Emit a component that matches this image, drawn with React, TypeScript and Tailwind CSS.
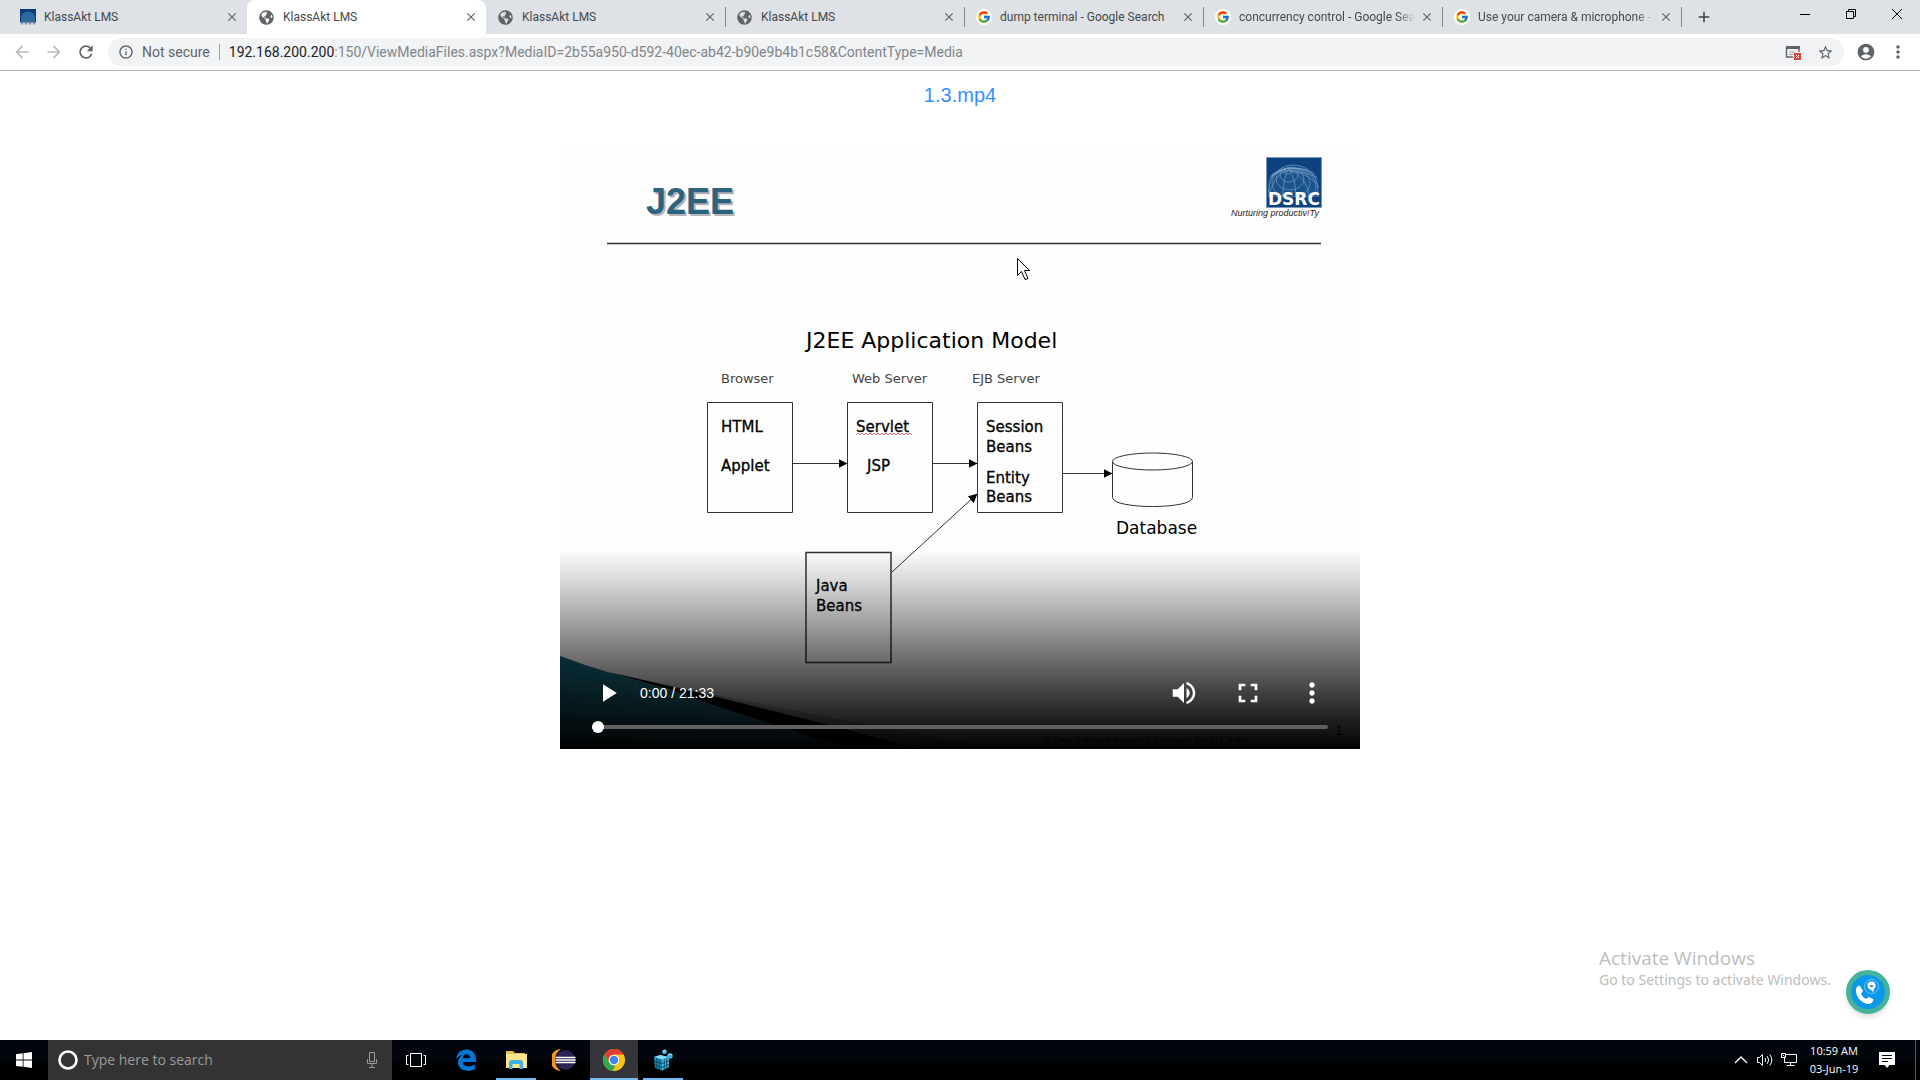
import React from "react";
import { MdRefresh, MdAccountCircle, MdStarBorder, MdMoreVert, MdInfoOutline, MdArrowBack, MdArrowForward, MdClose, MdAdd, MdPlayArrow, MdVolumeUp, MdFullscreen } from "react-icons/md";
import { FaGlobeAmericas } from "react-icons/fa";
import { FcGoogle } from "react-icons/fc";

const GRID = [0, 1, 2, 3, 4, 5, 6];

function DsrcMark() {
  return (
    <svg viewBox="0 0 16 16" className="size-4" aria-hidden="true">
      <rect width="16" height="16" fill="#0b3f7a" />
      <path d="M1 13V9a7 6.500 0 0 1 14 0v4z" fill="#2f6a9e" />
      <path d="M0 13.500h16V16H0z" fill="#d4d9df" />
      <path d="M1 14.800h2m2 0h2m2 0h2m2 0h2" stroke="#5d6e85" />
    </svg>
  );
}

function Favicon({ kind }: { kind: string }) {
  if (kind === "dsrc") return <DsrcMark />;
  if (kind === "google")
    return (
      <span className="flex size-4 items-center justify-center rounded-full bg-white">
        <FcGoogle size={14} />
      </span>
    );
  return <FaGlobeAmericas size={15} className="mr-px text-[#5f6368]" />;
}

const TABS = [
  { title: "KlassAkt LMS", kind: "dsrc" },
  { title: "KlassAkt LMS", kind: "globe", active: true },
  { title: "KlassAkt LMS", kind: "globe" },
  { title: "KlassAkt LMS", kind: "globe" },
  { title: "dump terminal - Google Search", kind: "google" },
  { title: "concurrency control - Google Sea", kind: "google", faded: true },
  { title: "Use your camera & microphone -", kind: "google", faded: true },
];

function TabStrip() {
  return (
    <header className="flex h-[34px] bg-[#dee1e6] pl-2">
      <div role="tablist" className="flex min-w-0 flex-1">
        {TABS.map((t, i) => (
          <div
            key={i}
            className={
              t.active
                ? "flex w-[239px] items-center rounded-t-lg bg-white pr-[7px] pl-3"
                : "flex w-[239px] items-center pr-[7px] pl-3"
            }
          >
            <button role="tab" aria-selected={!!t.active} className="flex min-w-0 flex-1 items-center gap-2 text-left">
              <span className="shrink-0">
                <Favicon kind={t.kind} />
              </span>
              <span
                className={
                  t.faded
                    ? "block flex-1 [mask-image:linear-gradient(to_right,black_90%,transparent)] font-['Roboto'] text-xs whitespace-nowrap text-[#45494d]"
                    : "block flex-1 font-['Roboto'] text-xs whitespace-nowrap text-[#45494d]"
                }
              >
                {t.title}
              </span>
            </button>
            <button aria-label="Close tab" className="ml-1 flex size-4 items-center justify-center text-[#5f6368]">
              <MdClose size={14} />
            </button>
            {i > 1 ? <span className="-mr-2 ml-[7px] h-5 w-px bg-[#85898e]" /> : <span className="-mr-2 ml-2" />}
          </div>
        ))}
        <button aria-label="New tab" className="ml-[11px] flex w-6 items-center justify-center text-[#3c4043]">
          <MdAdd size={18} />
        </button>
      </div>
      <div className="flex h-7 shrink-0 text-black">
        <button aria-label="Minimize" className="flex w-[46px] items-center justify-center">
          <svg viewBox="0 0 10 10" className="size-[10px]"><path d="M0 5.500h10" stroke="currentColor" /></svg>
        </button>
        <button aria-label="Restore" className="flex w-[46px] items-center justify-center">
          <svg viewBox="0 0 10 10" className="size-[10px]" fill="none" stroke="currentColor"><path d="M.500 2.500h7v7h-7zM2.500 2.500v-2h7v7h-2" /></svg>
        </button>
        <button aria-label="Close" className="flex w-[46px] items-center justify-center">
          <svg viewBox="0 0 10 10" className="size-[10px]" stroke="currentColor"><path d="M0 0l10 10M10 0L0 10" /></svg>
        </button>
      </div>
    </header>
  );
}

function Toolbar() {
  return (
    <nav className="flex h-[37px] items-center border-b border-[#b4b6b9] bg-white px-3 font-['Roboto'] text-[#5f6368]">
      <button aria-label="Back" className="mr-3 flex w-5 justify-center text-[#babcbe]"><MdArrowBack size={20} /></button>
      <button aria-label="Forward" className="mr-3 flex w-5 justify-center text-[#babcbe]"><MdArrowForward size={20} /></button>
      <button aria-label="Reload" className="mr-3 flex w-5 justify-center"><MdRefresh size={20} /></button>
      <div className="flex h-7 min-w-0 flex-1 items-center rounded-full bg-[#f1f3f4] px-[10px]">
        <MdInfoOutline size={16} />
        <span className="ml-2 text-sm">Not secure</span>
        <span className="mx-[9px] h-4 w-px bg-[#9aa0a6]" />
        <div role="textbox" aria-label="Address" className="flex-1 text-sm whitespace-nowrap text-[#80868b]">
          <span className="text-[#202124]">192.168.200.200</span>:150/ViewMediaFiles.aspx?MediaID=2b55a950-d592-40ec-ab42-b90e9b4b1c58&amp;ContentType=Media
        </div>
        <button aria-label="Pop-up blocked" className="mr-4">
          <svg viewBox="0 0 16 16" className="size-4" fill="none">
            <path d="M1.500 3v10H8M14 3v5" stroke="#5f6368" strokeWidth="1.400" />
            <path d="M1 2h14v3H1z" fill="#5f6368" />
            <path d="M4 8h6M4 10.500h4" stroke="#9aa0a6" />
            <rect x="9" y="9" width="7" height="7" fill="#db4437" />
            <path d="M11 11l3 3m0-3l-3 3" stroke="#fff" />
          </svg>
        </button>
        <button aria-label="Bookmark this page"><MdStarBorder size={17} /></button>
      </div>
      <button aria-label="Profile" className="ml-3"><MdAccountCircle size={20} /></button>
      <button aria-label="Menu" className="ml-3"><MdMoreVert size={20} /></button>
    </nav>
  );
}

const LINKS = ["M233 314.500h54", "M373 314.500h44", "M503 324.500h49", "M332 423l85-78"];

function Slide() {
  return (
    <svg viewBox="0 0 800 600" className="block w-full" role="img" aria-label="J2EE Application Model">
      <defs>
        <marker id="arrow" viewBox="0 0 9 9" refX="8.500" refY="4.500" markerWidth="9" markerHeight="9" markerUnits="userSpaceOnUse" orient="auto">
          <path d="M0 0l9 4.500L0 9z" />
        </marker>
        <clipPath id="globe"><path d="M708 48V38a25 24 0 0 1 51 0v10z" /></clipPath>
        <linearGradient id="teal" x1="0" y1="0" x2="1" y2="1">
          <stop offset="0" stopColor="#0f627a" />
          <stop offset="1" stopColor="#48b4c8" />
        </linearGradient>
        <linearGradient id="shade" x1="0" y1="0" x2="0" y2="1">
          <stop offset="0" stopColor="#000" stopOpacity="0" />
          <stop offset=".2" stopColor="#000" stopOpacity=".19" />
          <stop offset=".45" stopColor="#000" stopOpacity=".46" />
          <stop offset=".7" stopColor="#000" stopOpacity=".73" />
          <stop offset=".87" stopColor="#000" stopOpacity=".89" />
          <stop offset="1" stopColor="#000" stopOpacity=".99" />
        </linearGradient>
      </defs>
      <rect width="800" height="600" fill="#fefefe" />

      <g fontFamily="Liberation Sans" fontWeight="700" fontSize="36">
        <text x="88" y="67" fill="#b9b4b8">J2EE</text>
        <text x="86" y="65" fill="#2c6480">J2EE</text>
      </g>
      <path d="M47 94.500h714" stroke="#333" strokeWidth="1.500" />

      <rect x="706.500" y="8.500" width="55" height="50" fill="#0c4280" stroke="#7c95b5" />
      <g clipPath="url(#globe)" fill="none" stroke="#7fa9cc" strokeWidth=".6">
        <path d="M709 48V40a24.500 24 0 0 1 49 0v8z" fill="#1a5389" />
        {GRID.map((i) => (
          <ellipse key={i} cx={728 + i} cy={22 + i * 4} rx={4 + i * 5} ry={3 + i * 4} />
        ))}
        {GRID.map((i) => (
          <path key={"m" + i} d={`M728 21Q${700 + i * 12} 26 ${694 + i * 14} 52`} />
        ))}
      </g>
      <text x="708" y="56" fontFamily="DejaVu Sans" fontWeight="700" fontSize="17" fill="#fff">DSRC</text>
      <text x="671" y="67" fontFamily="Liberation Sans" fontStyle="italic" fontSize="9" fill="#222">
        Nurturing productiv<tspan fill="#c4472e">I</tspan>Ty
      </text>

      <g fontFamily="DejaVu Sans" fill="#000">
        <text x="246" y="199" fontSize="22">J2EE Application Model</text>
        <g fontSize="13" fill="#444">
          <text x="161" y="234">Browser</text>
          <text x="292" y="234">Web Server</text>
          <text x="412" y="234">EJB Server</text>
        </g>
        <g fontSize="15" stroke="#000" strokeWidth=".3">
          <text x="161" y="283">HTML</text>
          <text x="161" y="322">Applet</text>
          <text x="296" y="283">Servlet</text>
          <text x="307" y="322">JSP</text>
          <text x="426" y="283">Session</text>
          <text x="426" y="303">Beans</text>
          <text x="426" y="334">Entity</text>
          <text x="426" y="353">Beans</text>
          <text x="256" y="442">Java</text>
          <text x="256" y="462">Beans</text>
        </g>
        <text x="556" y="385" fontSize="17">Database</text>
      </g>
      <path d="M296 286l2-2 2 2 2-2 2 2 2-2 2 2 2-2 2 2 2-2 2 2 2-2 2 2 2-2 2 2 2-2 2 2 2-2 2 2 2-2 2 2 2-2 2 2 2-2 2 2 2-2 2 2 2-2 2 2" fill="none" stroke="#e06a74" />

      <g fill="none" stroke="#333">
        <path d="M147.500 253.500h85v110h-85zM287.500 253.500h85v110h-85zM417.500 253.500h85v110h-85z" />
        <path d="M246 403.500h85v110h-85z" strokeWidth="1.500" />
        {LINKS.map((d) => (
          <path key={d} d={d} markerEnd="url(#arrow)" />
        ))}
        <ellipse cx="592.500" cy="312.500" rx="40" ry="8.500" />
        <path d="M552.500 312.500v36c0 12 80 12 80 0v-36" />
      </g>

      <path d="M48 523C180 552 300 574 440 600H340z" fill="#c3d0d4" />
      <path d="M0 507Q26 517 51 524L115 542L224 578L292 600H0z" fill="url(#teal)" />
      <path d="M48 523L153 547L265 575L360 600H290L224 579L153 556L115 542z" fill="#000" />
      <g fontFamily="Liberation Sans" fill="#000">
        <text x="484" y="594" fontSize="9">© Data Software Research Company Pvt Ltd. India</text>
        <text x="776" y="586" fontSize="12">1</text>
      </g>
      <rect y="400" width="800" height="200" fill="url(#shade)" />

      <path d="M457.500 109.500v17l4-4 3.500 8 3-1-3.500-8h5z" fill="#fff" stroke="#000" />
    </svg>
  );
}

function VideoPlayer() {
  return (
    <section className="relative w-full max-w-[800px]" aria-label="Video player">
      <Slide />
      <div className="absolute inset-x-0 bottom-0 px-8 pb-4 font-['Liberation_Sans'] text-white">
        <div className="mb-1 flex h-12 items-center">
          <button aria-label="Play" className="flex w-8 justify-center"><MdPlayArrow size={30} /></button>
          <span className="ml-4 flex-1 text-sm">0:00 / 21:33</span>
          <button aria-label="Mute" className="flex w-16 justify-center"><MdVolumeUp size={30} /></button>
          <button aria-label="Full screen" className="flex w-16 justify-center"><MdFullscreen size={32} /></button>
          <button aria-label="More options" className="-mr-4 flex w-16 justify-center"><MdMoreVert size={32} /></button>
        </div>
        <input
          type="range"
          aria-label="Seek"
          min={0}
          max={1293}
          defaultValue={0}
          className="block h-3 w-full appearance-none bg-transparent [&::-webkit-slider-runnable-track]:h-1 [&::-webkit-slider-runnable-track]:rounded-full [&::-webkit-slider-runnable-track]:bg-[#606060] [&::-webkit-slider-thumb]:-mt-1 [&::-webkit-slider-thumb]:size-3 [&::-webkit-slider-thumb]:appearance-none [&::-webkit-slider-thumb]:rounded-full [&::-webkit-slider-thumb]:bg-white"
        />
      </div>
    </section>
  );
}

function EdgeIcon() {
  return (
    <svg viewBox="0 0 22 22" className="size-[22px]" aria-hidden="true">
      <path d="M1 10C2 4 6 .500 11.500.500c6 0 9.500 4.500 9.500 10v2.500H7.500c.3 3 3 4.300 6 4.300 2.400 0 4.500-.7 6.300-1.800v4.700c-2 1-4.500 1.500-7.200 1.500C7 21.700 3 18.500 3 13.500c0-3.500 2-6 4.600-7.500C5 6.500 2.500 8 1 10zm6.700-.8h7.600c0-2.600-1.300-4-3.600-4-2.200 0-3.600 1.600-4 4z" fill="#0078d7" />
    </svg>
  );
}

function FolderIcon() {
  return (
    <svg viewBox="0 0 22 20" className="h-5 w-[22px]" aria-hidden="true">
      <path d="M1 1h7l2 2h10v3H1z" fill="#e8bd4a" />
      <path d="M1 4h21v14H1z" fill="#fde58e" />
      <path d="M4 19V12l1.500-2h11l1.500 2v7h-3.500v-5h-7v5z" fill="#3fb2e3" />
    </svg>
  );
}

function EclipseIcon() {
  return (
    <svg viewBox="0 0 24 22" className="h-[22px] w-6" aria-hidden="true">
      <path d="M9 0A10.500 11 0 0 0 9 22 13 13 0 0 1 9 0z" fill="#f7941e" />
      <circle cx="13.500" cy="11" r="10" fill="#2c2255" />
      <path d="M3.500 8.500h20M3.300 11h20.400M3.500 13.500h20" stroke="#fff" strokeWidth="1.400" />
    </svg>
  );
}

function ChromeIcon() {
  return (
    <svg viewBox="0 0 22 22" className="size-[22px]" aria-hidden="true">
      <circle cx="11" cy="11" r="11" fill="#fbc116" />
      <path d="M1.470 5.500A11 11 0 0 1 20.530 5.500H11a5.500 5.500 0 0 0-4.760 8.250z" fill="#e33b2e" />
      <path d="M1.470 5.500 6.240 13.750A5.500 5.500 0 0 0 11 16.500h1.500L9.500 21.900A11 11 0 0 1 1.470 5.500z" fill="#2da94f" />
      <circle cx="11" cy="11" r="5.200" fill="#fff" />
      <circle cx="11" cy="11" r="4.200" fill="#4285f4" />
    </svg>
  );
}

function CubeIcon() {
  return (
    <svg viewBox="0 0 22 22" className="size-[22px]" aria-hidden="true">
      <path d="M2 8l6-2 9 2v10l-7 3.500L3 19z" fill="#1b84ad" />
      <path d="M2 8l6-2 9 2-7 2.500z" fill="#7fdcf5" />
      <path d="M10 10.500 17 8v10l-7 3.500z" fill="#3bb5de" />
      <path d="M2 12l8 2.500 7-2.500M2.500 15.500l7.500 3 7-3M4.700 9v10M7.300 10v10.500M12.300 10v10.500M14.700 9v10" stroke="#0b4a66" fill="none" strokeWidth=".9" />
      <circle cx="12.500" cy="2.700" r="2.300" fill="#4cc3e8" />
      <circle cx="18" cy="7" r="2.800" fill="#35aeda" />
      <path d="M11 2.500l1.500-1.500 1.500 1M16 6.500l2-1.500 2 1" stroke="#a9ecfb" fill="none" />
    </svg>
  );
}

function Taskbar() {
  return (
    <footer className="flex h-10 bg-[linear-gradient(#02050b_50%,#000_60%)] font-['Open_Sans'] text-white">
      <button aria-label="Start" className="flex w-12 items-center justify-center">
        <svg viewBox="0 0 16 16" className="size-4" fill="#fff"><path d="M0 2.200 6.700 1.300v6.300H0zM7.500 1.200 16 0v7.600H7.500zM0 8.400h6.700v6.400L0 13.900zM7.500 8.400H16V16l-8.500-1.200z" /></svg>
      </button>
      <label className="flex w-[344px] items-center bg-[#333] pr-3 pl-[10px]">
        <svg viewBox="0 0 20 20" className="size-5"><circle cx="10" cy="10" r="8.500" fill="none" stroke="#fff" strokeWidth="2.600" /></svg>
        <input aria-label="Search" placeholder="Type here to search" className="ml-[6px] min-w-0 flex-1 bg-transparent text-sm placeholder:text-[#9b9b9b]" />
        <svg viewBox="0 0 16 18" className="h-[18px] w-4" fill="none" stroke="#9b9b9b"><path d="M5.500 1.500h5v9h-5zM3.500 8v4.500h9V8M8 12.500v4M5 16.500h6" /></svg>
      </label>
      <button aria-label="Task view" className="flex w-12 items-center justify-center">
        <svg viewBox="0 0 20 16" className="h-4 w-5" fill="none" stroke="#fff"><path d="M4.500 1.500h11v13h-11zM2.500 3.500h-2v9h2M17.500 3.500h2v9h-2" /></svg>
      </button>
      <button aria-label="Edge" className="mx-[2px] flex w-12 items-center justify-center"><EdgeIcon /></button>
      <button aria-label="File Explorer" className="ml-1 flex w-10 items-center justify-center border-b-2 border-[#76b9ed] pt-[2px]"><FolderIcon /></button>
      <button aria-label="Eclipse" className="mx-1 flex w-12 items-center justify-center"><EclipseIcon /></button>
      <button aria-label="Chrome" className="-ml-[2px] flex w-12 items-center justify-center border-b-2 border-[#76b9ed] bg-[#33353a] pt-[2px]"><ChromeIcon /></button>
      <button aria-label="Registry Editor" className="ml-[5px] flex w-10 items-center justify-center border-b-2 border-[#76b9ed] pt-[2px]"><CubeIcon /></button>
      <div className="flex flex-1 items-center justify-end pr-1">
        <button aria-label="Show hidden icons" className="mr-2">
          <svg viewBox="0 0 16 16" className="size-4" fill="none" stroke="#fff" strokeWidth="1.300"><path d="M2 11l6-6 6 6" /></svg>
        </button>
        <button aria-label="Volume" className="mr-2">
          <svg viewBox="0 0 16 16" className="size-4" fill="none" stroke="#fff"><path d="M.500 5.500h2l3-3v11l-3-3h-2zM8 6q1.300 2 0 4M10.300 4.200q2.700 3.800 0 7.600M12.800 2.500q4 5.500 0 11" /></svg>
        </button>
        <button aria-label="Network" className="mr-3">
          <svg viewBox="0 0 16 16" className="size-4" fill="none" stroke="#fff"><path d="M5 2.500h10.500v8h-12V6M9.500 10.500v3M5.500 13.500h8M.500 1.500h4v4h-4zM1.500 2.500l2 2" /></svg>
        </button>
        <time className="mr-5 flex w-[50px] flex-col items-center text-[11px] leading-[18px] whitespace-nowrap">
          <span>10:59 AM</span>
          <span>03-Jun-19</span>
        </time>
        <button aria-label="Notifications" className="mr-5">
          <svg viewBox="0 0 16 16" className="size-4"><path d="M0 0h16v13h-5.500L8 16l-2.500-3H0z" fill="#fff" /><path d="M3 3.500h10M3 6.500h10M3 9.500h6" stroke="#000" /></svg>
        </button>
        <span className="h-10 w-px bg-[#555]" />
      </div>
    </footer>
  );
}

export default function App() {
  return (
    <div className="flex min-h-screen flex-col bg-white font-['Open_Sans',sans-serif]">
      <TabStrip />
      <Toolbar />
      <main className="relative flex flex-1 flex-col items-center pt-2">
        <a href="#video" className="font-['Liberation_Sans'] text-xl leading-8 text-[#3490ff]">1.3.mp4</a>
        <div id="video" className="mt-[38px] flex w-full justify-center">
          <VideoPlayer />
        </div>
        <div className="absolute right-[30px] bottom-[26px] flex items-end gap-2">
          <div className="w-[239px] pb-6 text-[#bdbdbd]">
            <p className="text-[19px] leading-6 whitespace-nowrap">Activate Windows</p>
            <p className="font-['Noto_Sans'] text-sm leading-5 whitespace-nowrap">Go to Settings to activate Windows.</p>
          </div>
          <button aria-label="Call support" className="flex size-11 items-center justify-center rounded-full border-5 border-[#45b39d] bg-[#0b98e8] shadow-md">
            <svg viewBox="0 0 34 34" className="size-[34px]">
              <path d="M5 14c1-3 3-4 4-3l3 5-2 3q2 4 5 5l3-2 4 2c1 1-1 5-4 5C11 29 4 22 5 14z" fill="#fff" />
              <circle cx="20.500" cy="11.500" r="7" fill="none" stroke="#6bc4f4" />
              <circle cx="20.500" cy="10.500" r="4" fill="#fff" /><path d="M19 14h4l-1 3z" fill="#fff" /><path d="M18 10.500h5q-2.500 3-5 0z" fill="#0b6fb0" />
            </svg>
          </button>
        </div>
      </main>
      <Taskbar />
    </div>
  );
}
